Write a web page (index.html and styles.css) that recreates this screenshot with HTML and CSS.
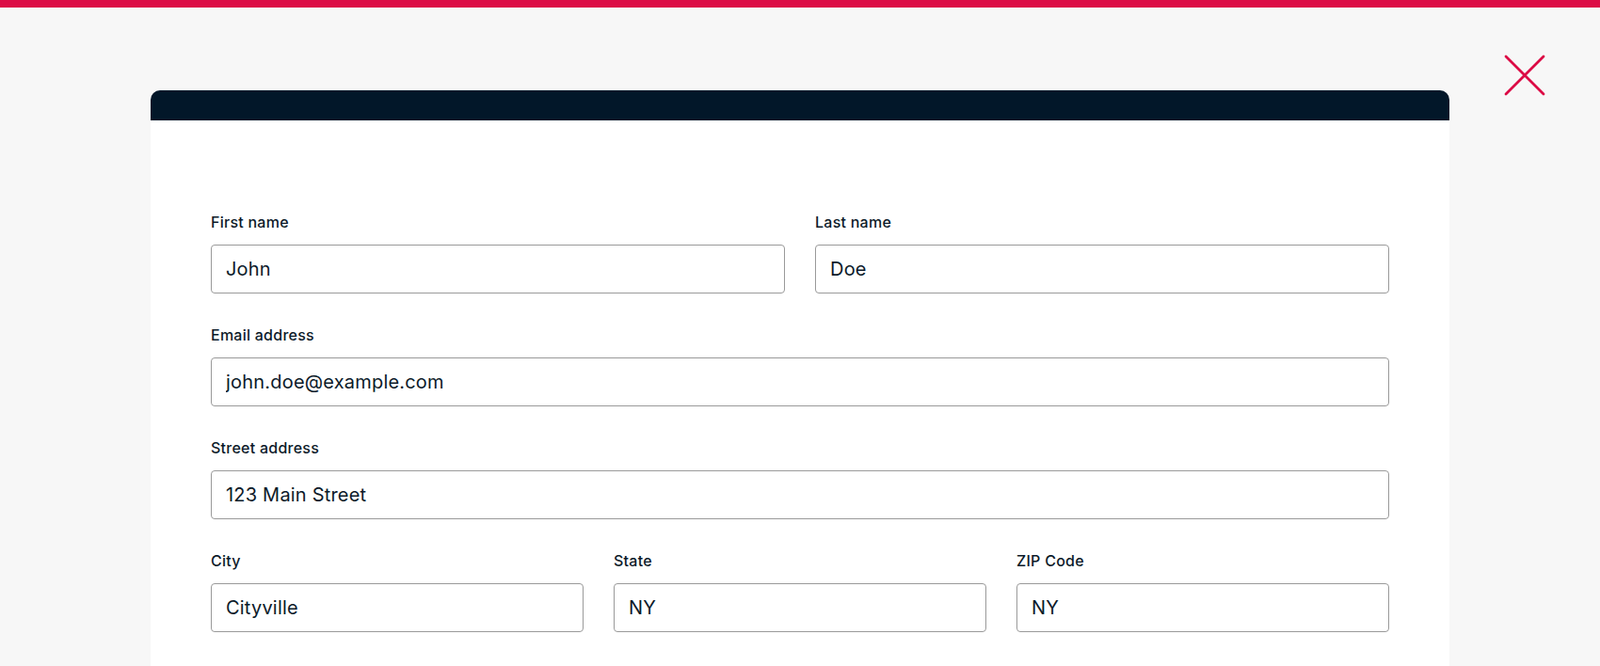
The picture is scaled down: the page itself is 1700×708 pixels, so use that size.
FILE: index.html
```html
<!DOCTYPE html>
<html lang="en">

<head>
    <meta charset="UTF-8">
    <meta name="viewport" content="width=device-width, initial-scale=1.0">
    <title>Address details</title>
    <link rel="stylesheet" href="styles.css">
</head>

<body>
    <div class="top-bar"></div>

    <div class="page">
        <button class="close-button" type="button" aria-label="Close">
            <svg width="44" height="44" viewBox="0 0 44 44">
                <path d="M2 2 L42 42 M42 2 L2 42" stroke="#dc0b45" stroke-width="2.8" stroke-linecap="round" fill="none" />
            </svg>
        </button>

        <div class="modal">
            <div class="modal-header"></div>
            <form class="modal-body">
                <div class="row two">
                    <div class="field">
                        <label for="first-name">First name</label>
                        <input id="first-name" type="text" value="John">
                    </div>
                    <div class="field">
                        <label for="last-name">Last name</label>
                        <input id="last-name" type="text" value="Doe">
                    </div>
                </div>

                <div class="row">
                    <div class="field">
                        <label for="email">Email address</label>
                        <input id="email" type="text" value="john.doe@example.com">
                    </div>
                </div>

                <div class="row">
                    <div class="field">
                        <label for="street">Street address</label>
                        <input id="street" type="text" value="123 Main Street">
                    </div>
                </div>

                <div class="row three">
                    <div class="field">
                        <label for="city">City</label>
                        <input id="city" type="text" value="Cityville">
                    </div>
                    <div class="field">
                        <label for="state">State</label>
                        <input id="state" type="text" value="NY">
                    </div>
                    <div class="field">
                        <label for="zip">ZIP Code</label>
                        <input id="zip" type="text" value="NY">
                    </div>
                </div>
            </form>
        </div>
    </div>
</body>

</html>
```

FILE: styles.css
```css
body {
    margin: 0;
    background: #f7f7f7;
    font-family: Inter, "Noto Sans", sans-serif;
    color: #0c1a29;
}

.top-bar {
    height: 8px;
    background: #dc0b45;
}

.page {
    position: relative;
    padding-top: 88px;
}

.close-button {
    position: absolute;
    top: 49px;
    right: 57px;
    width: 46px;
    height: 46px;
    padding: 1px;
    border: 0;
    background: none;
    cursor: pointer;
}

.modal {
    width: 1380px;
    margin: 0 auto;
}

.modal-header {
    height: 32px;
    background: #021729;
    border-radius: 10px 10px 0 0;
}

.modal-body {
    display: flex;
    flex-direction: column;
    gap: 32px;
    background: #fff;
    padding: 96px 64px;
}

.row {
    display: grid;
    grid-template-columns: 1fr;
    gap: 32px;
}

.row.two {
    grid-template-columns: 1fr 1fr;
}

.row.three {
    grid-template-columns: 1fr 1fr 1fr;
}

.field label {
    display: block;
    font-size: 16px;
    font-weight: 500;
    letter-spacing: 0.25px;
    line-height: 24px;
    margin-bottom: 12px;
}

.field input {
    display: block;
    box-sizing: border-box;
    width: 100%;
    height: 52px;
    padding: 0 15px;
    border: 1px solid #9a9a9a;
    border-radius: 4px;
    background: #fff;
    font-family: inherit;
    font-size: 20px;
    letter-spacing: 0.2px;
    color: #0c1a29;
}
```
